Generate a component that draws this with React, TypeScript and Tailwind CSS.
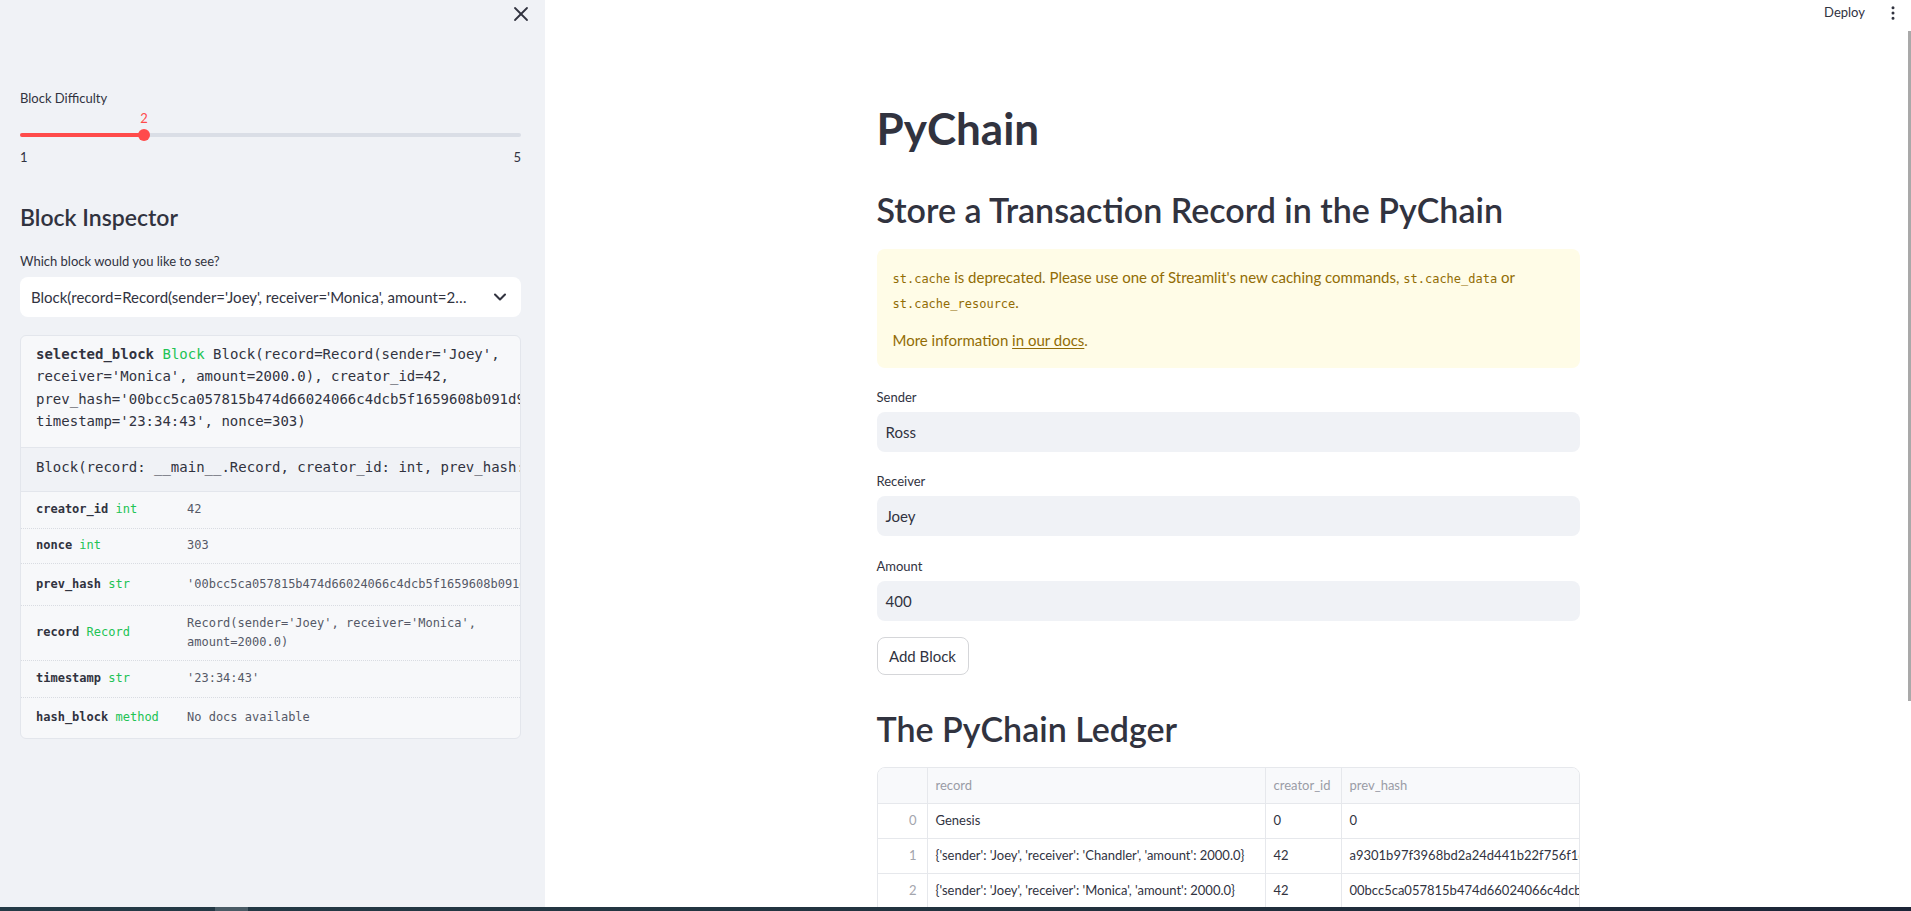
import { ChevronDown, EllipsisVertical, X } from "lucide-react";

const mono = "font-['DejaVu_Sans_Mono',monospace]";

const attrs = [
  { name: "creator_id", type: "int", value: ["42"], h: "h-[37px]" },
  { name: "nonce", type: "int", value: ["303"], h: "h-[35px]" },
  {
    name: "prev_hash",
    type: "str",
    value: ["'00bcc5ca057815b474d66024066c4dcb5f1659608b091d9e3a7c2f41b8d05e6c'"],
    h: "h-[42px]",
  },
  {
    name: "record",
    type: "Record",
    value: ["Record(sender='Joey', receiver='Monica',", "amount=2000.0)"],
    h: "h-[55px]",
  },
  { name: "timestamp", type: "str", value: ["'23:34:43'"], h: "h-[37px]" },
  { name: "hash_block", type: "method", value: ["No docs available"], h: "h-[40px]" },
];

const ledger = [
  { record: "Genesis", creator: "0", hash: "0" },
  {
    record: "{'sender': 'Joey', 'receiver': 'Chandler', 'amount': 2000.0}",
    creator: "42",
    hash: "a9301b97f3968bd2a24d441b22f756f16478c0e2d93a15b",
  },
  {
    record: "{'sender': 'Joey', 'receiver': 'Monica', 'amount': 2000.0}",
    creator: "42",
    hash: "00bcc5ca057815b474d66024066c4dcb5f1659608b091d9",
  },
];

function Sidebar() {
  return (
    <aside className="w-[545px] shrink-0 bg-[#f0f2f6] overflow-hidden">
      <div className="h-[28px] flex items-center justify-end pr-[12px]">
        <X size={24} strokeWidth={1.8} className="text-[#31333f]" />
      </div>
      <div className="pl-[20px] pr-[24px]">
        <div className="mt-[60px] text-[13px] leading-[20px]">Block Difficulty</div>
        <div className="relative h-[20px]">
          <span className="absolute left-[124px] -translate-x-1/2 text-[13px] leading-[20px] text-[#ff4b4b]">
            2
          </span>
        </div>
        <div className="h-[14px] flex items-center">
          <div className="relative w-full h-[4px] rounded-full bg-[#dadee6]">
            <div className="h-full w-[124px] rounded-full bg-[#ff4b4b]" />
            <div className="absolute left-[118px] top-[-4px] w-[12px] h-[12px] rounded-full bg-[#ff4b4b]" />
          </div>
        </div>
        <div className="mt-[5px] flex justify-between text-[13px] leading-[20px]">
          <span>1</span>
          <span>5</span>
        </div>

        <h2 className="mt-[36px] text-[23px] leading-[28px] font-semibold">Block Inspector</h2>
        <div className="mt-[20px] text-[13px] leading-[20px]">Which block would you like to see?</div>
        <div className="mt-[6px] h-[40px] bg-white rounded-[8px] flex items-center pl-[11px] pr-[11px]">
          <span className="flex-1 min-w-0 truncate pr-[19px] text-[15px]">
            Block(record=Record(sender='Joey', receiver='Monica', amount=2000.0), creator_id=42, prev_hash='00bcc5ca')
          </span>
          <ChevronDown size={20} strokeWidth={2.5} className="shrink-0" />
        </div>

        <div className={`mt-[18px] border border-[#e3e6ec] rounded-[6px] bg-[#f7f8fa] overflow-hidden ${mono}`}>
          <div className="pl-[15px] pt-[7px] pb-[14px] text-[14px] leading-[22.4px] whitespace-pre">
            <div>
              <span className="font-bold">selected_block</span> <span className="text-[#21c354]">Block</span>{" "}
              Block(record=Record(sender='Joey',
            </div>
            <div>receiver='Monica', amount=2000.0), creator_id=42,</div>
            <div>prev_hash='00bcc5ca057815b474d66024066c4dcb5f1659608b091d9e3a7c2f41b8d05e6c',</div>
            <div>timestamp='23:34:43', nonce=303)</div>
          </div>
          <div className="border-t border-[#e3e6ec] bg-[#f0f2f6] pl-[15px] pt-[8px] pb-[13px] text-[14px] leading-[22.4px] whitespace-pre">
            Block(record: __main__.Record, creator_id: int, prev_hash: str, timestamp: str, nonce: int = 0)
          </div>
          <div className="border-t border-[#e3e6ec] text-[12px] leading-[19.2px]">
            {attrs.map((a, i) => (
              <div
                key={a.name}
                className={`flex items-center ${a.h} ${i < attrs.length - 1 ? "border-b border-dotted border-[#d9dce2]" : ""}`}
              >
                <div className="w-[166px] shrink-0 pl-[15px] whitespace-pre">
                  <span className="font-bold">{a.name}</span> <span className="text-[#21c354]">{a.type}</span>
                </div>
                <div className="flex-1 min-w-0 overflow-hidden whitespace-pre text-[#555867]">
                  {a.value.map((v) => (
                    <div key={v}>{v}</div>
                  ))}
                </div>
              </div>
            ))}
          </div>
        </div>
      </div>
    </aside>
  );
}

function Field({ label, value, gap }: { label: string; value: string; gap: string }) {
  return (
    <div className={gap}>
      <div className="text-[13px] leading-[20px]">{label}</div>
      <div className="mt-[5px] h-[40px] rounded-[8px] bg-[#f0f2f6] flex items-center px-[9px] text-[15px]">
        {value}
      </div>
    </div>
  );
}

function Main() {
  return (
    <main className="relative flex-1 bg-white overflow-hidden">
      <header className="h-[26px] flex items-center justify-end">
        <span className="text-[13px] mr-[19px]">Deploy</span>
        <EllipsisVertical size={18} strokeWidth={2} className="mr-[9px] text-[#31333f]" />
      </header>
      <div className="absolute right-0 top-[31px] w-[3px] h-[670px] bg-[#a9a9a9]" />

      <div className="w-[703px] mx-auto">
        <h1 className="mt-[76px] text-[44px] leading-[52.8px] font-bold">PyChain</h1>
        <h2 className="mt-[35px] text-[34px] leading-[40.8px] font-semibold">
          Store a Transaction Record in the PyChain
        </h2>

        <div className="mt-[18px] rounded-[8px] bg-[#fffce7] text-[#926c05] px-[16px] pt-[16px] pb-[15px] text-[15px] leading-[25.6px]">
          <p className="whitespace-nowrap">
            <span className={`${mono} text-[12px] leading-none`}>st.cache</span> is deprecated. Please use one of
            Streamlit's new caching commands, <span className={`${mono} text-[12px] leading-none`}>st.cache_data</span>{" "}
            or
            <br />
            <span className={`${mono} text-[12px] leading-none`}>st.cache_resource</span>.
          </p>
          <p className="mt-[12px]">
            More information <span className="underline underline-offset-2">in our docs</span>.
          </p>
        </div>

        <Field label="Sender" value="Ross" gap="mt-[19px]" />
        <Field label="Receiver" value="Joey" gap="mt-[19px]" />
        <Field label="Amount" value="400" gap="mt-[20px]" />

        <button className="mt-[16px] w-[92px] h-[38px] rounded-[8px] border border-[#d5d6d9] bg-white text-[15px]">
          Add Block
        </button>

        <h2 className="mt-[34px] text-[34px] leading-[40.8px] font-semibold">The PyChain Ledger</h2>

        <div className="mt-[17px] border border-[#e6e8ec] rounded-t-[8px] overflow-hidden text-[13px]">
          <div className="flex h-[36px] bg-[#f8f9fb] border-b border-[#e6e8ec] text-[#9a9ca6]">
            <div className="w-[50px] shrink-0 border-r border-[#e6e8ec]" />
            <div className="w-[338px] shrink-0 border-r border-[#e6e8ec] px-[8px] flex items-center">record</div>
            <div className="w-[76px] shrink-0 border-r border-[#e6e8ec] px-[8px] flex items-center">creator_id</div>
            <div className="flex-1 px-[8px] flex items-center">prev_hash</div>
          </div>
          {ledger.map((r, i) => (
            <div key={i} className="flex h-[35px] border-b border-[#e6e8ec]">
              <div className="w-[50px] shrink-0 border-r border-[#e6e8ec] pr-[10px] flex items-center justify-end text-[#a3a5ad]">
                {i}
              </div>
              <div className="w-[338px] shrink-0 border-r border-[#e6e8ec] px-[8px] flex items-center overflow-hidden whitespace-nowrap">
                {r.record}
              </div>
              <div className="w-[76px] shrink-0 border-r border-[#e6e8ec] px-[8px] flex items-center">{r.creator}</div>
              <div className="flex-1 min-w-0 pl-[8px] flex items-center overflow-hidden whitespace-nowrap">{r.hash}</div>
            </div>
          ))}
        </div>
      </div>
    </main>
  );
}

export default function App() {
  return (
    <div className="h-[911px] flex flex-col overflow-hidden font-['Lato',sans-serif] text-[#31333f]">
      <div className="flex flex-1 min-h-0">
        <Sidebar />
        <Main />
      </div>
      <div className="h-[4px] shrink-0 flex bg-linear-to-r from-[#243b47] via-[#22333f] to-[#1c2537]">
        <div className="ml-[215px] w-[33px] bg-[#4a5c66]" />
      </div>
    </div>
  );
}
